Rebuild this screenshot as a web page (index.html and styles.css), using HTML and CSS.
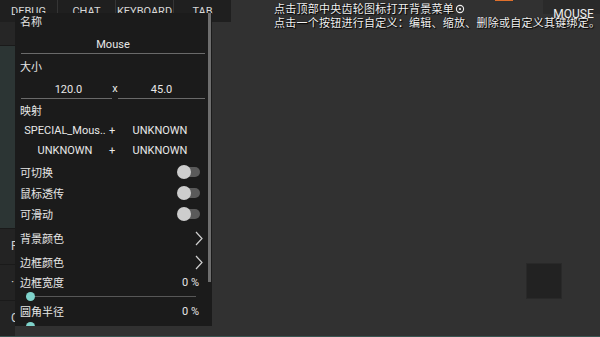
FILE: index.html
```html
<!DOCTYPE html>
<html lang="zh-CN">
<head>
    <meta charset="UTF-8">
    <meta name="viewport" content="width=device-width, initial-scale=1.0">
    <title>按键编辑</title>
    <link rel="stylesheet" href="styles.css">
</head>
<body>

    <div class="stage">
        <!-- 背景上的按钮 -->
        <div class="topbar">
            <div class="top-btn">DEBUG</div>
            <div class="top-btn">CHAT</div>
            <div class="top-btn">KEYBOARD</div>
            <div class="top-btn">TAB</div>
        </div>
        <div class="middle">
            <div class="side-col">
                <div class="side-btn side-dark"></div>
                <div class="side-btn side-teal"></div>
                <div class="side-btn side-key">P</div>
                <div class="side-btn side-key">·</div>
                <div class="side-btn side-key">C</div>
            </div>
        </div>
        <div class="bottombar">
            <div class="bottom-btn"></div>
            <div class="bottom-btn"></div>
            <div class="bottom-btn"></div>
        </div>

        <div class="orange-mark"></div>

        <div class="hint">
            <div>点击顶部中央齿轮图标打开背景菜单<svg class="gear" width="10" height="10" viewBox="0 0 10 10"><circle cx="5" cy="5" r="3.6" fill="none" stroke="#eee" stroke-width="1.1"/><circle cx="5" cy="5" r="1.1" fill="#eee"/></svg></div>
            <div>点击一个按钮进行自定义：编辑、缩放、删除或自定义其键绑定。</div>
        </div>

        <div class="mouse-btn">MOUSE</div>
        <div class="square-btn"></div>

        <!-- 编辑面板 -->
        <div class="panel">
            <div class="label label-first">名称</div>
            <div class="field field-full">Mouse</div>

            <div class="label label-size">大小</div>
            <div class="size-row">
                <div class="field">120.0</div>
                <span class="times">x</span>
                <div class="field">45.0</div>
            </div>

            <div class="label label-map">映射</div>
            <div class="map-row">
                <span>SPECIAL_Mous..</span>
                <span>+</span>
                <span>UNKNOWN</span>
            </div>
            <div class="map-row">
                <span>UNKNOWN</span>
                <span>+</span>
                <span>UNKNOWN</span>
            </div>

            <div class="switch-row"><span>可切换</span><span class="switch"><span class="track"></span><span class="thumb"></span></span></div>
            <div class="switch-row"><span>鼠标透传</span><span class="switch"><span class="track"></span><span class="thumb"></span></span></div>
            <div class="switch-row"><span>可滑动</span><span class="switch"><span class="track"></span><span class="thumb"></span></span></div>

            <div class="nav-row nav-first">
                <span>背景颜色</span>
                <svg width="8" height="15" viewBox="0 0 8 15"><polyline points="1,1 7,7.5 1,14" fill="none" stroke="#d0d0d0" stroke-width="1.2"/></svg>
            </div>
            <div class="nav-row">
                <span>边框颜色</span>
                <svg width="8" height="15" viewBox="0 0 8 15"><polyline points="1,1 7,7.5 1,14" fill="none" stroke="#d0d0d0" stroke-width="1.2"/></svg>
            </div>

            <div class="value-row"><span>边框宽度</span><span>0 %</span></div>
            <div class="slider"><span class="slider-track"></span><span class="slider-thumb"></span></div>
            <div class="value-row value-tall"><span>圆角半径</span><span>0 %</span></div>
            <div class="slider"><span class="slider-track"></span><span class="slider-thumb"></span></div>

            <div class="scrollbar"></div>
        </div>
    </div>

</body>
</html>
```

FILE: styles.css
```css
body {
    margin: 0;
    background-color: #313131;
    font-family: Roboto, "Noto Sans CJK SC", sans-serif;
    color: #e6e6e6;
    overflow: hidden;
}
.stage {
    position: relative;
    width: 600px;
    height: 336px;
    border-bottom: 1px solid #3a5552;
    display: flex;
    flex-direction: column;
    overflow: hidden;
}

/* 背景按钮 */
.topbar {
    width: 231px;
    height: 22px;
    display: flex;
    background-color: #1f1f1f;
}
.top-btn {
    flex: 1;
    border-right: 1px solid #353535;
    text-align: center;
    font-size: 11px;
    line-height: 24px;
    color: #d8d8d8;
    overflow: hidden;
    white-space: nowrap;
}
.top-btn:last-child {
    border-right: none;
}
.middle {
    flex: 1;
    display: flex;
}
.side-col {
    width: 15px;
    display: flex;
    flex-direction: column;
}
.side-btn {
    border-bottom: 1px solid #1a1a1a;
    font-size: 12px;
    color: #d0d0d0;
    padding-left: 11px;
    overflow: hidden;
}
.side-dark {
    height: 23px;
    background-color: #262626;
}
.side-teal {
    height: 182px;
    background-color: #2c3534;
}
.side-key {
    height: 35px;
    line-height: 35px;
    background-color: #232323;
}
.bottombar {
    height: 10px;
    display: flex;
}
.bottom-btn {
    width: 32px;
    background-color: #242424;
    border-right: 1px solid #3a3a3a;
}

.orange-mark {
    position: absolute;
    left: 495px;
    top: 0;
    width: 18px;
    height: 1px;
    background-color: #e0702c;
}
.hint {
    position: absolute;
    left: 274px;
    top: 1px;
    font-family: "Noto Sans CJK SC", sans-serif;
    font-size: 11px;
    line-height: 14px;
    letter-spacing: 0.25px;
    color: #f2f2f2;
    white-space: nowrap;
    text-shadow: 0 0 1px #000, 1px 1px 1px #000;
}
.gear {
    margin-left: 1px;
    vertical-align: -1px;
}
.mouse-btn {
    position: absolute;
    left: 543px;
    top: 0;
    width: 57px;
    height: 14px;
    background-color: #2a2a2a;
    font-size: 12px;
    line-height: 28px;
    text-align: center;
    color: #f0f0f0;
    padding-left: 2px;
}
.square-btn {
    position: absolute;
    left: 526px;
    top: 263px;
    width: 34px;
    height: 34px;
    background-color: #222;
    border: 1px solid #292929;
}

/* 编辑面板 */
.panel {
    position: absolute;
    left: 15px;
    top: 13px;
    width: 197px;
    height: 313px;
    background-color: #1b1b1b;
    overflow: hidden;
    font-size: 11px;
}
.label {
    height: 22px;
    line-height: 22px;
    padding-left: 5px;
}
.label-first {
    height: 20px;
    line-height: 20px;
}
.label-size {
    margin-top: 3px;
}
.label-map {
    margin-top: 4px;
    height: 18px;
    line-height: 18px;
}
.field {
    box-sizing: border-box;
    height: 20px;
    padding-top: 2px;
    line-height: 17px;
    text-align: center;
    border-bottom: 1px solid #6a6a6a;
    color: #e8e8e8;
}
.field-full {
    height: 21px;
    padding-top: 3px;
    margin: 0 7px 0 6px;
}
.size-row {
    display: grid;
    grid-template-columns: 91px 6px 87px;
    margin-left: 6px;
}
.size-row .field:first-child {
    padding-left: 4px;
}
.times {
    line-height: 20px;
    text-align: center;
}
.map-row {
    display: grid;
    grid-template-columns: 88px 6px 90px;
    margin-left: 6px;
    height: 20px;
    line-height: 20px;
    text-align: center;
    color: #e8e8e8;
    white-space: nowrap;
}
.switch-row, .nav-row, .value-row {
    display: flex;
    justify-content: space-between;
    align-items: center;
    padding-left: 5px;
}
.switch-row {
    height: 21px;
    padding-right: 12px;
}
.switch {
    position: relative;
    width: 23px;
    height: 14px;
}
.track {
    position: absolute;
    left: 6px;
    right: 0;
    top: 2px;
    height: 10px;
    border-radius: 5px;
    background-color: #5a5a5a;
}
.thumb {
    position: absolute;
    left: 0;
    top: 0;
    width: 14px;
    height: 14px;
    border-radius: 50%;
    background-color: #cdcdcd;
}
.nav-row {
    height: 24px;
    padding-right: 9px;
}
.nav-first {
    margin-top: 2px;
}
.value-row {
    height: 16px;
    padding-right: 13px;
}
.value-tall {
    height: 18px;
}
.slider {
    position: relative;
    margin-left: 11px;
    width: 170px;
    height: 12px;
}
.slider-track {
    position: absolute;
    left: 4px;
    right: 0;
    top: 6px;
    height: 1px;
    background-color: #575757;
}
.slider-thumb {
    position: absolute;
    left: 0;
    top: 2px;
    width: 9px;
    height: 9px;
    border-radius: 50%;
    background-color: #7fd3cb;
}
.scrollbar {
    position: absolute;
    right: 1px;
    top: 0;
    width: 3px;
    height: 269px;
    background-color: #6e6e6e;
}
```
